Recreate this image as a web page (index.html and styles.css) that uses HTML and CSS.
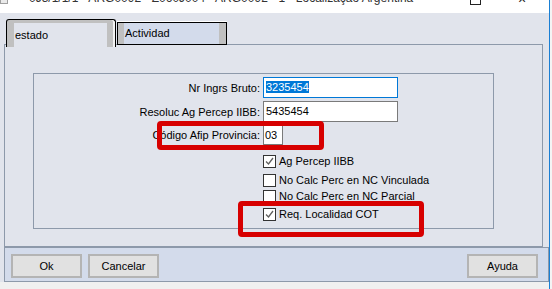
FILE: index.html
```html
<!DOCTYPE html>
<html lang="es">
<head>
    <meta charset="UTF-8" />
    <meta name="viewport" content="width=device-width, initial-scale=1.0" />
    <title>Localização Argentina</title>
    <link rel="stylesheet" href="styles.css">
</head>
<body>
<div class="window">
    <div class="titlebar">
        <span class="title-icon"></span>
        <span class="title-text">0J3/1/1/1 - ARG0092 - Z060J004 - ARG0092 - 1 - Localização Argentina</span>
        <span class="win-btn max"></span>
        <span class="win-btn close">×</span>
    </div>

    <div class="tabs">
        <div class="tab active">estado</div>
        <div class="tab">Actividad</div>
    </div>

    <div class="panel">
        <div class="groupbox">
            <div class="form">
                <div class="label">Nr Ingrs Bruto:</div>
                <div class="field focus"><span class="selected">3235454</span></div>

                <div class="label">Resoluc Ag Percep IIBB:</div>
                <div class="field">5435454</div>

                <div class="label">Código Afip Provincia:</div>
                <div class="field short">03</div>

                <div class="checks">
                    <div class="check"><span class="box checked"><svg viewBox="0 0 11 11" width="11" height="11"><path d="M2 5.5 L4.5 8 L9 2" fill="none" stroke="#5f5f5f" stroke-width="1.3"/></svg></span>Ag Percep IIBB</div>
                    <div class="check c2"><span class="box"></span>No Calc Perc en NC Vinculada</div>
                    <div class="check c3"><span class="box"></span>No Calc Perc en NC Parcial</div>
                    <div class="check c4"><span class="box checked"><svg viewBox="0 0 11 11" width="11" height="11"><path d="M2 5.5 L4.5 8 L9 2" fill="none" stroke="#5f5f5f" stroke-width="1.3"/></svg></span>Req. Localidad COT</div>
                </div>
            </div>
        </div>
    </div>

    <div class="buttonbar">
        <button class="btn">Ok</button>
        <button class="btn">Cancelar</button>
        <button class="btn right">Ayuda</button>
    </div>
    <div class="statusline"></div>
</div>

<!-- marques rouges par-dessus le formulaire -->
<div class="mark mark-code"></div>
<div class="mark mark-cot"></div>
</body>
</html>
```

FILE: styles.css
```css
body {
  margin: 0;
  width: 552px;
  height: 289px;
  overflow: hidden;
  background: #f4f4f4;
  font-family: "Liberation Sans", Arial, sans-serif;
  font-size: 11px;
  color: #000;
  position: relative;
}
.window {
  width: 549px;
  height: 289px;
  border-right: 1px solid #1a7fd4;
  background: #e1e4ec;
}
.titlebar {
  height: 13px;
  background: #fff;
  display: flex;
  align-items: flex-start;
  overflow: hidden;
  position: relative;
}
.title-icon {
  width: 6px;
  height: 3px;
  border: 1px solid #a0a0a0;
  border-top: none;
  margin: 0 0 0 0;
  background: #eaeaea;
}
.title-text {
  margin: -10px 0 0 21px;
  font-size: 12px;
  line-height: 16px;
  color: #333;
  white-space: nowrap;
}
.win-btn {
  position: absolute;
  top: -6px;
}
.win-btn.max {
  left: 470px;
  width: 9px;
  height: 9px;
  border: 1px solid #222;
}
.win-btn.close {
  left: 518px;
  top: -8px;
  font-size: 14px;
  line-height: 14px;
  color: #222;
}
.tabs {
  display: flex;
  align-items: flex-start;
  height: 25px;
  padding: 6px 0 0 6px;
  position: relative;
  z-index: 1;
}
.tab {
  box-sizing: border-box;
  width: 110px;
  height: 23px;
  margin: 3px 0 0 1px;
  border: 1px solid #000;
  background: #d3dbeb;
  box-shadow: inset 6px 0 0 #c0c0c0, inset -7px 0 0 #c0c0c0, 0 -1px 0 #fff;
  padding: 4px 0 0 7px;
  line-height: 13px;
}
.tab.active {
  height: 28px;
  margin: 0;
  border-bottom: none;
  border-radius: 3px 3px 0 0;
  background: #e1e4ec;
  box-shadow: inset -2px 0 0 #f2f2f2, inset -8px 0 0 #c0c0c0, inset 7px 0 0 #c0c0c0, inset 0 3px 0 #c0c0c0;
  padding: 9px 0 0 8px;
}
.panel {
  box-sizing: border-box;
  margin-left: 4px;
  width: 539px;
  height: 203px;
  border: 1px solid #8d99aa;
  padding: 28px 0 0 28px;
}
.groupbox {
  box-sizing: border-box;
  width: 461px;
  height: 156px;
  border: 1px solid #8d99aa;
  padding-top: 3px;
}
.form {
  display: grid;
  grid-template-columns: 226px auto;
  column-gap: 3px;
  row-gap: 3px;
  align-items: center;
  justify-items: start;
}
.label {
  justify-self: end;
  white-space: nowrap;
}
.field {
  box-sizing: border-box;
  width: 135px;
  height: 21px;
  border: 1px solid #7a7a7a;
  background: #fff;
  padding: 3px 0 0 2px;
  line-height: 13px;
}
.field.focus {
  border-color: #0078d7;
}
.field.short {
  width: 20px;
  height: 20px;
  padding-left: 1px;
}
.selected {
  background: #0078d7;
  color: #fff;
}
.checks {
  grid-column: 2;
  margin-top: 7px;
  display: flex;
  flex-direction: column;
}
.check {
  display: flex;
  align-items: center;
  height: 13px;
  line-height: 13px;
  white-space: nowrap;
}
.check.c2 { margin-top: 6px; }
.check.c3 { margin-top: 3px; }
.check.c4 { margin-top: 5px; }
.box {
  box-sizing: border-box;
  width: 13px;
  height: 13px;
  border: 1px solid #333;
  background: #fff;
  margin-right: 3px;
  display: flex;
}
.buttonbar {
  box-sizing: border-box;
  margin-left: 4px;
  width: 545px;
  height: 35px;
  border: 1px solid #8d99aa;
  background: #d3dbeb;
  display: flex;
  gap: 6px;
  padding: 6px 10px 0 6px;
}
.btn {
  box-sizing: border-box;
  width: 71px;
  height: 24px;
  border: 2px solid #b4b4b4;
  background: #e1e1e1;
  font-family: "Liberation Sans", Arial, sans-serif;
  font-size: 11px;
  color: #000;
  padding: 0;
}
.btn.right {
  margin-left: auto;
}
.statusline {
  height: 7px;
  background: #f0f0f0;
}
.mark {
  position: absolute;
  box-sizing: border-box;
  border: 5px solid #d70000;
  border-radius: 4px;
}
.mark-code {
  left: 157px;
  top: 121px;
  width: 167px;
  height: 29px;
}
.mark-cot {
  left: 238px;
  top: 201px;
  width: 186px;
  height: 36px;
}
```
